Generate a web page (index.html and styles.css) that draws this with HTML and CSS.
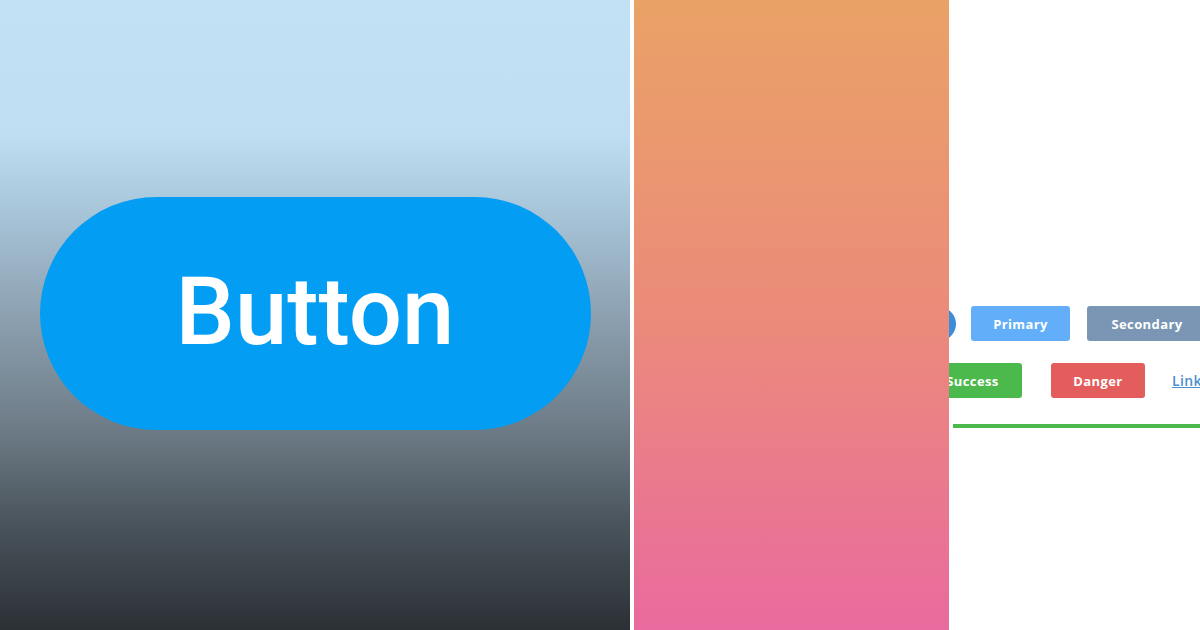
FILE: index.html
```html
<!DOCTYPE html>
<html>
<head>
<meta charset="utf-8">
<link rel="stylesheet" href="styles.css">
</head>
<body>
<div class="page">
  <section class="hero">
    <div class="big-btn">Button</div>
  </section>
  <section class="gradient"></section>
  <section class="demo">
    <div class="row row1">
      <span class="circle"></span>
      <span class="btn primary">Primary</span>
      <span class="btn secondary">Secondary</span>
    </div>
    <div class="row row2">
      <span class="btn success">Success</span>
      <span class="btn danger">Danger</span>
      <a class="link">Link</a>
    </div>
    <div class="bar"></div>
  </section>
</div>
</body>
</html>
```
FILE: styles.css
```css
html, body { margin: 0; padding: 0; background: #fff; }
.page { display: flex; width: 1200px; height: 630px; overflow: hidden; }
.hero {
  width: 630px; flex: none; height: 630px;
  display: flex; align-items: center; justify-content: center;
  background: linear-gradient(to bottom, #c2e1f4 0px, #c0def2 135px, #abc9dd 200px, #8b9faf 320px, #6d7b86 430px, #4b555d 520px, #2b3035 630px);
}
.big-btn {
  width: 551px; height: 233px; border-radius: 117px;
  background: #039df4; color: #fff;
  display: flex; align-items: center; justify-content: center;
  font-family: Roboto, "Liberation Sans", sans-serif; font-weight: 500;
  font-size: 94px;
  margin-top: -3px; padding-bottom: 4px; box-sizing: border-box;
}
.gradient {
  width: 315px; flex: none; margin-left: 4px; height: 630px;
  background: linear-gradient(to bottom, #eaa266 0%, #eb8b7a 50%, #e96a9e 100%);
}
.demo {
  flex: 1; height: 630px; overflow: hidden; background: #fff;
  display: flex; flex-direction: column; padding-top: 306px; box-sizing: border-box;
  font-family: "Open Sans", "DejaVu Sans", sans-serif; font-weight: 700; font-size: 13px;
  letter-spacing: 0.4px;
}
.row { display: flex; align-items: center; height: 35px; flex: none; white-space: nowrap; }
.row2 { margin-top: 22px; }
.circle { width: 34px; height: 34px; border-radius: 50%; background: #3a8fd8; margin-left: -27px; flex: none; }
.btn {
  height: 35px; border-radius: 3px; color: #fff; flex: none;
  display: flex; align-items: center; justify-content: center; box-sizing: border-box;
}
.primary { width: 99px; background: #62aef8; margin-left: 15px; }
.secondary { width: 120px; background: #7a96b4; margin-left: 17px; }
.success { width: 99px; background: #4cb94c; margin-left: -26px; }
.danger { width: 94px; background: #e35d5d; margin-left: 29px; }
.link { margin-left: 27px; color: #4a8fd0; text-decoration: underline; font-weight: 600; font-size: 14px; }
.bar { height: 4px; background: #4cb94c; margin-top: 26px; margin-left: 4px; flex: none; }
```
